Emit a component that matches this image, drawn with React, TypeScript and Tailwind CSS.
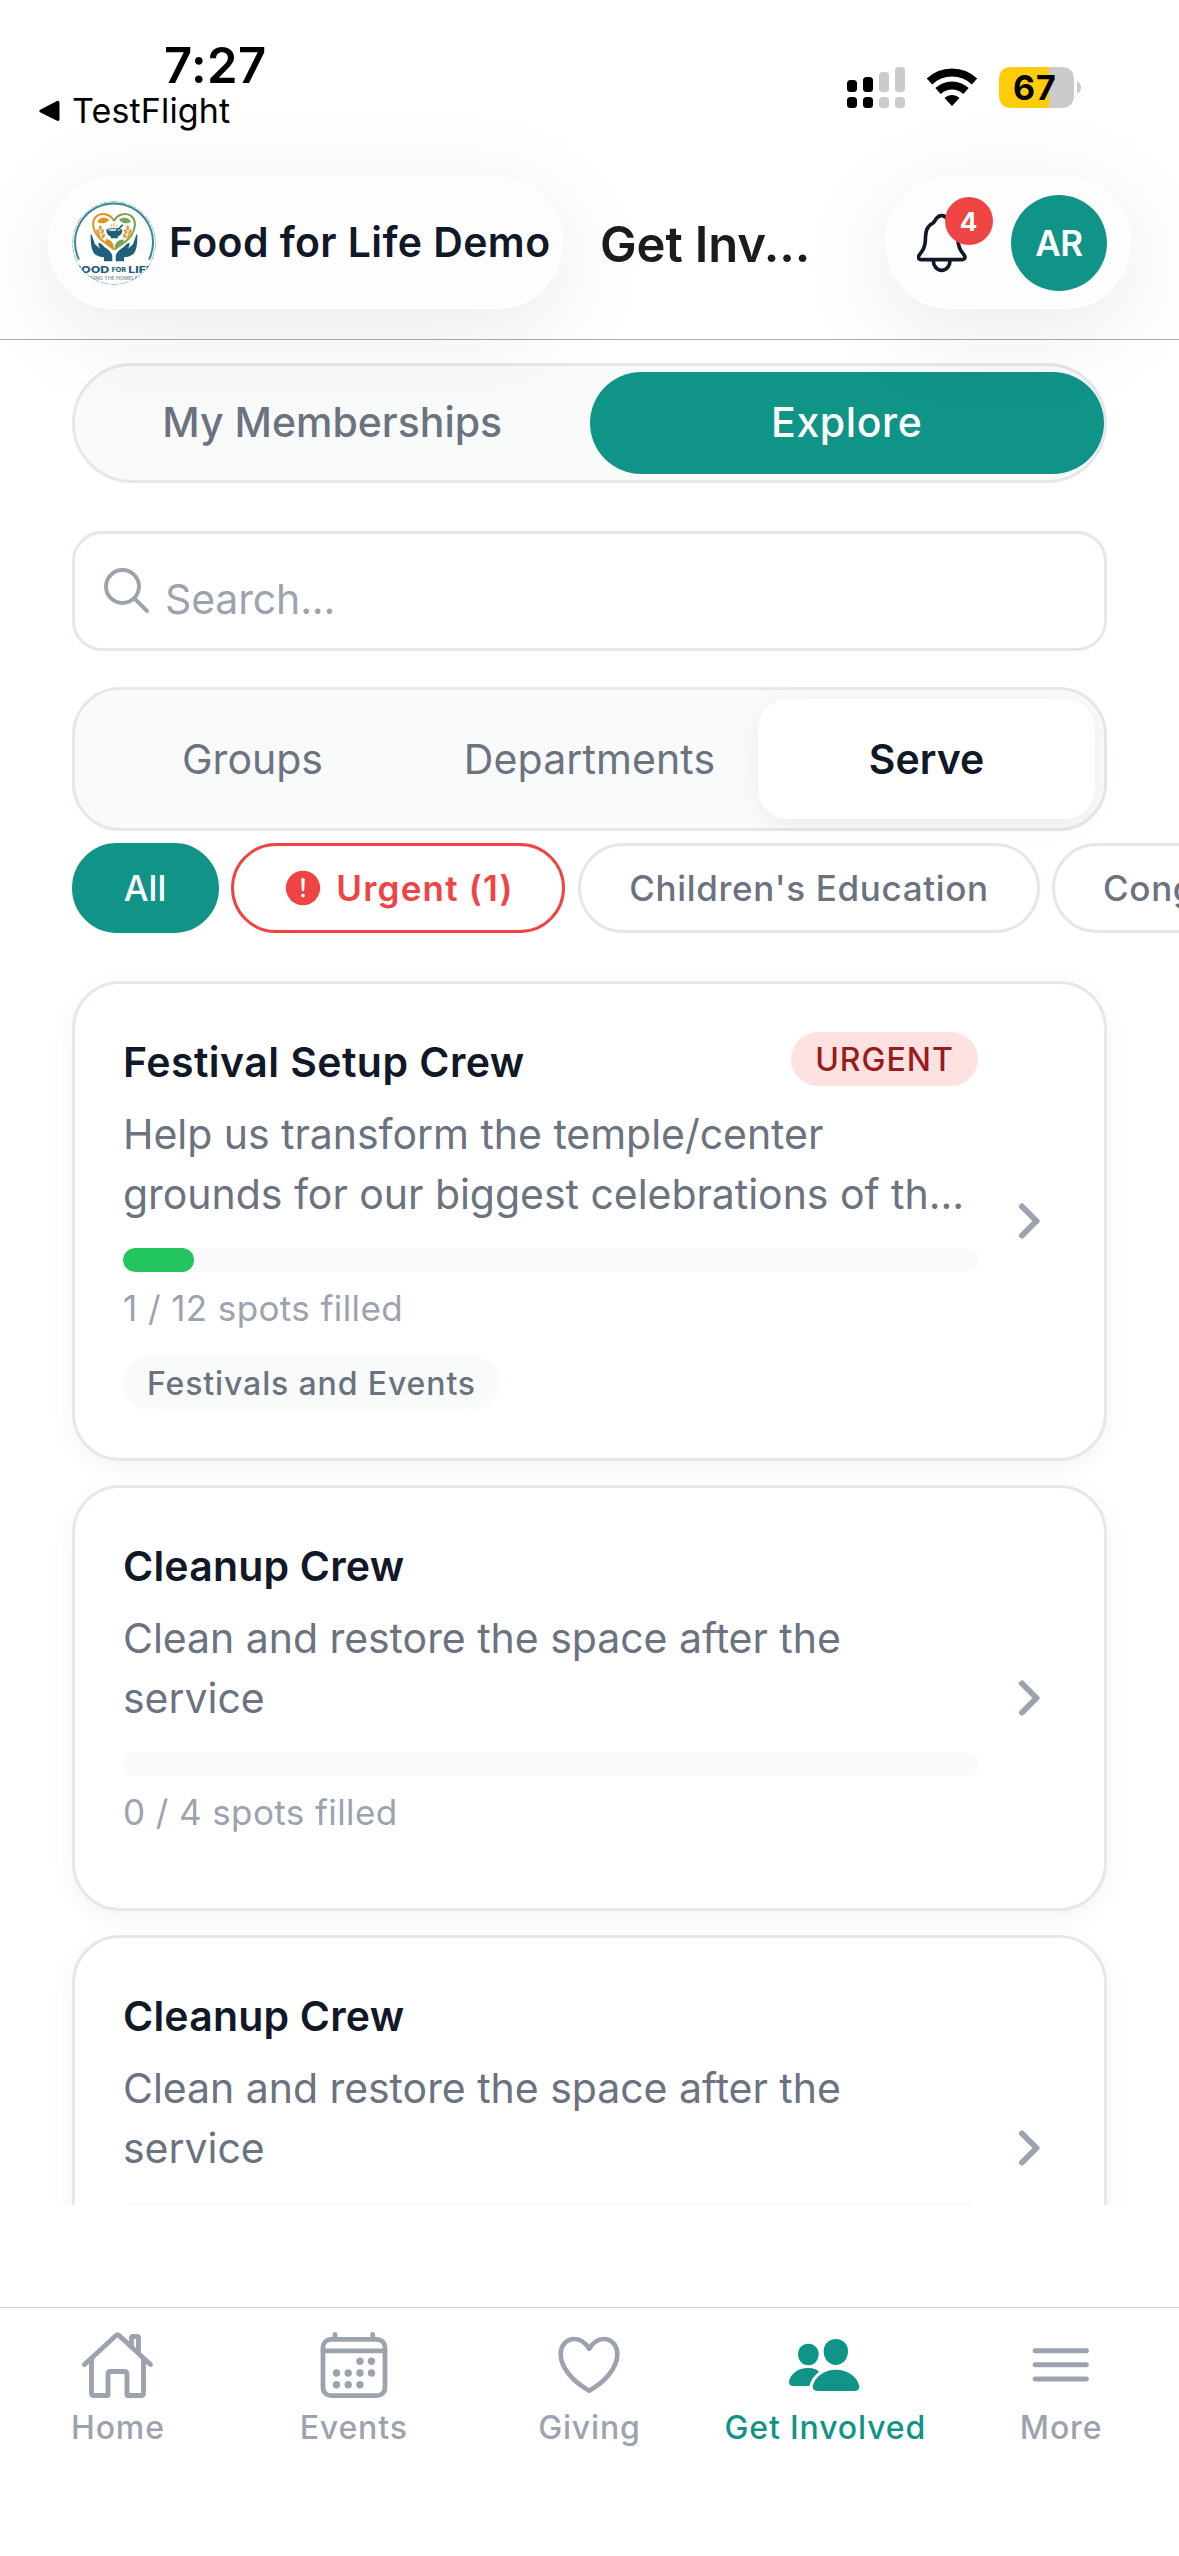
import type { ReactNode } from 'react'
import clsx from 'clsx'

interface Opportunity {
  id: number
  title: string
  description: string
  filled: number
  total: number
  urgent?: boolean
  category?: string
}

const opportunities: Opportunity[] = [
  {
    id: 1,
    title: 'Festival Setup Crew',
    description: 'Help us transform the temple/center grounds for our biggest celebrations of th...',
    filled: 1,
    total: 12,
    urgent: true,
    category: 'Festivals and Events',
  },
  { id: 2, title: 'Cleanup Crew', description: 'Clean and restore the space after the service', filled: 0, total: 4 },
  { id: 3, title: 'Cleanup Crew', description: 'Clean and restore the space after the service', filled: 0, total: 4 },
]

function StatusBar() {
  return (
    <div className="flex h-[177px] items-start justify-between pr-[98px] pl-[38px] text-black">
      <div className="pt-[35px]">
        <p className="pl-[126px] pt-px text-[49px] leading-[60px] font-semibold tracking-[0.4px]">7:27</p>
        <div className="flex items-center">
          <svg className="h-[22px] w-[23px]" viewBox="0 0 23 22">
            <path d="M2.6 9.4 18.5 1.2Q21.5 0 21.5 3.2V18.8Q21.5 22 18.5 20.6L2.6 12.6Q0 11 2.6 9.4Z" />
          </svg>
          <p className="ml-[11px] text-[34px] leading-[29px] tracking-[0.15px]">TestFlight</p>
        </div>
      </div>
      <div className="flex items-center gap-[21px] pt-[67px]">
        <svg className="h-[41px] w-[58px]" viewBox="0 0 58 41">
          <g fill="#000">
            <rect x="0" y="13" width="10" height="12" rx="3.5" />
            <rect x="16" y="10" width="10" height="15" rx="3.5" />
            <rect x="0" y="30" width="10" height="11" rx="3.5" />
            <rect x="16" y="30" width="10" height="11" rx="3.5" />
          </g>
          <g fill="#cbcbcb">
            <rect x="32" y="5" width="10" height="20" rx="3.5" />
            <rect x="48" y="0" width="10" height="25" rx="3.5" />
            <rect x="32" y="30" width="10" height="11" rx="3.5" />
            <rect x="48" y="30" width="10" height="11" rx="3.5" />
          </g>
        </svg>
        <svg className="h-[39px] w-[52px]" viewBox="0 0 52 39" fill="none" stroke="#000" strokeWidth="8">
          <path d="M3.5 13.5C16 1.5 36 1.5 48.5 13.5" />
          <path d="M12 23C20 15.5 32 15.5 40 23" />
          <path d="M18.5 30C23 26 29 26 33.5 30L26 38Z" fill="#000" stroke="none" />
        </svg>
        <div className="relative flex">
          <svg className="h-[41px] w-[82px]" viewBox="0 0 82 41">
            <path d="M13 0H62Q75 0 75 13V28Q75 41 62 41H50V0Z" fill="#cbcbcb" />
            <path d="M13 0H50V41H13Q0 41 0 28V13Q0 0 13 0Z" fill="#ffcc0a" />
            <path d="M78 14.5Q82 16 82 20.5T78 26.5Z" fill="#cbcbcb" />
          </svg>
          <span className="absolute top-0 left-[14px] text-[34px] leading-[42px] font-bold tracking-[0.8px]">67</span>
        </div>
      </div>
    </div>
  )
}

function Logo() {
  return (
    <svg className="size-[84px] shrink-0 rounded-full" viewBox="36 32 252 252" fill="none">
      <rect x="36" y="32" width="252" height="252" fill="#fff" />
      <circle cx="162" cy="158" r="124.5" stroke="#7cc4bf" strokeWidth="3" strokeDasharray="26 4" />
      <path d="M57 208A117 117 0 1 1 267 208" stroke="#3a8499" strokeWidth="6" />
      {/* two-tone heart */}
      <path d="M162 92C152 72 128 66 112 76C92 90 98 118 114 138C128 156 148 162 161 178" stroke="#de9420" strokeWidth="6" />
      <path d="M162 92C172 72 196 66 212 76C232 90 226 118 212 138C198 156 184 162 163 178" stroke="#79a457" strokeWidth="6" />
      <path d="M112 94C118 80 136 80 148 88C138 100 122 102 112 94Z" fill="#de9420" />
      <path d="M212 94C206 80 188 80 177 88C186 100 202 102 212 94Z" fill="#79a457" />
      <path d="M162 174C142 170 134 158 138 146C152 148 162 158 162 174Z" fill="#de9420" />
      <path d="M164 174C164 158 176 146 192 148C190 162 180 170 164 174Z" fill="#79a457" />
      <g fill="#e0a040">
        <ellipse cx="121" cy="113" rx="4.5" ry="8" />
        <ellipse cx="114" cy="124" rx="4.5" ry="8" transform="rotate(-30 114 124)" />
        <ellipse cx="127" cy="124" rx="4.5" ry="8" transform="rotate(30 127 124)" />
        <ellipse cx="117" cy="137" rx="4.5" ry="8" transform="rotate(-30 117 137)" />
        <ellipse cx="130" cy="137" rx="4.5" ry="8" transform="rotate(30 130 137)" />
        <ellipse cx="203" cy="113" rx="4.5" ry="8" />
        <ellipse cx="197" cy="124" rx="4.5" ry="8" transform="rotate(-30 197 124)" />
        <ellipse cx="210" cy="124" rx="4.5" ry="8" transform="rotate(30 210 124)" />
        <ellipse cx="194" cy="137" rx="4.5" ry="8" transform="rotate(-30 194 137)" />
        <ellipse cx="207" cy="137" rx="4.5" ry="8" transform="rotate(30 207 137)" />
      </g>
      {/* bowl and steam */}
      <path d="M139 118H187C187 130 180 136 173 139L174 144H152L153 139C146 136 139 130 139 118Z" fill="#1f5f78" />
      <ellipse cx="163" cy="119" rx="23" ry="4" fill="#fff" stroke="#1f5f78" strokeWidth="3" />
      <path d="M168 122 187 105" stroke="#1f5f78" strokeWidth="5" strokeLinecap="round" />
      <path d="M154 112Q151 107 155 102M162 111Q158 105 163 98M170 110Q168 106 171 103" stroke="#cf9a52" strokeWidth="2.5" />
      {/* hands */}
      <path d="M92 135Q90 130 95 133L105 162L120 175Q113 161 116 158Q121 156 134 171Q156 184 157 199V213H132V201Q110 200 101 187Q91 172 92 135Z" fill="#1f5f78" />
      <path d="M232 135Q234 130 229 133L219 162L204 175Q211 161 208 158Q203 156 190 171Q168 184 167 199V213H192V201Q214 200 223 187Q233 172 232 135Z" fill="#1f5f78" />
      <g fontFamily="Inter, sans-serif">
        <text x="41" y="248" fontSize="28" fontWeight="800" fill="#1f5f78" textLength="107" lengthAdjust="spacingAndGlyphs">FOOD</text>
        <text x="155" y="244" fontSize="18" fontWeight="800" fill="#1f5f78" textLength="43" lengthAdjust="spacingAndGlyphs">FOR</text>
        <text x="205" y="248" fontSize="28" fontWeight="800" fill="#1f5f78" textLength="76" lengthAdjust="spacingAndGlyphs">LIFE</text>
        <text x="62" y="270" fontSize="13.5" fontWeight="600" fill="#8d9497" textLength="192" lengthAdjust="spacingAndGlyphs">FEEDING THE HOMELESS</text>
      </g>
    </svg>
  )
}

function Header() {
  return (
    <header className="relative z-10 h-[340px] border-b border-[#aeaeae]">
      <StatusBar />
      <div className="flex h-[132px] items-center pr-12 pl-12">
        <div className="flex h-full w-[515px] shrink-0 items-center gap-3 rounded-full border-2 border-white bg-[#fdfdfd] pl-[22px] shadow-[0_20px_100px_rgba(0,0,0,0.09)]">
          <Logo />
          <span className="pl-px text-[41px] font-semibold tracking-[0.4px] whitespace-nowrap text-[#111827]">Food for Life Demo</span>
        </div>
        <h1 className="ml-[37px] pt-[3px] text-[49px] font-semibold tracking-[-0.15px] whitespace-nowrap text-[#1c1c1e]">Get Inv...</h1>
        <div className="ml-auto flex h-full w-[246px] items-center justify-between rounded-full border-2 border-white bg-[#fdfdfd] pr-[22px] pl-[30px] shadow-[0_20px_100px_rgba(0,0,0,0.09)]">
          <div className="relative">
            <svg className="h-[60px] w-[50px]" viewBox="52 99 150 180" fill="none" stroke="#111827" strokeWidth="11" strokeLinejoin="round">
              <path d="M64 239H188Q200 237 194 226C184 213 176 204 175 182C174 155 173 140 152 129C144 122 142 107 126 107C110 107 108 122 100 129C79 140 78 155 77 182C76 204 68 213 58 226Q52 237 64 239Z" />
              <path d="M101 242A25 29 0 0 0 151 242" />
            </svg>
            <span className="absolute -top-4 left-7 flex size-12 items-center justify-center rounded-full bg-[#ef4444] pr-px text-[26px] font-bold text-white">4</span>
          </div>
          <div className="flex size-24 items-center justify-center rounded-full bg-[#119488] text-[35px] font-semibold tracking-[-0.3px] text-white">AR</div>
        </div>
      </div>
    </header>
  )
}

function Chip({ className, children }: { className?: string; children: ReactNode }) {
  return (
    <button
      type="button"
      className={clsx(
        'flex h-[90px] shrink-0 items-center justify-center rounded-full border-[3px] text-[35px] whitespace-nowrap',
        className,
      )}
    >
      {children}
    </button>
  )
}

function OpportunityCard({ item }: { item: Opportunity }) {
  return (
    <div className="flex shrink-0 items-center gap-6 rounded-[48px] border-[3px] border-[#e5e7eb] bg-white p-12 shadow-[0_6px_24px_rgba(0,0,0,0.05)]">
      <div className="w-[855px]">
        <div className="flex h-[60px] items-start justify-between">
          <h2 className={clsx('text-[41px] leading-[60px] font-semibold text-[#111827]', item.urgent ? 'tracking-[0.45px]' : 'tracking-[0.2px]')}>{item.title}</h2>
          {item.urgent && (
            <span className="flex h-[54px] w-[187px] items-center justify-center rounded-full bg-[#fee2e2] pt-px text-[32px] font-medium tracking-[1px] text-[#991b1b]">URGENT</span>
          )}
        </div>
        <p className="mt-3 h-[120px] text-[41px] leading-[60px] tracking-[-0.04px] text-[#6b7280]">{item.description}</p>
        <div className="mt-6 h-6 overflow-hidden rounded-full bg-[#f9fafa]">
          <div className="h-full rounded-full bg-[#22c55e]" style={{ width: `${(item.filled / item.total) * 100}%` }} />
        </div>
        <p className="mt-3 text-[35px] leading-[48px] tracking-[0.4px] text-[#9ca3af]">
          {`${item.filled} / ${item.total} spots filled`}
        </p>
        <div className="mt-6 flex">
          {item.category && (
            <span className="flex h-[54px] w-[377px] items-center justify-center rounded-full bg-[#f9fafa] pt-px text-[32px] font-medium tracking-[0.87px] text-[#6b7280]">
              {item.category}
            </span>
          )}
        </div>
      </div>
      <svg className="size-[54px] shrink-0" viewBox="0 0 54 54" fill="none" stroke="#9ca3af" strokeWidth="6" strokeLinecap="round" strokeLinejoin="round">
        <path d="M20 12.500 34.500 27 20 41.500" />
      </svg>
    </div>
  )
}

const navItems = [
  {
    label: 'Home',
    icon: (
      <svg className="h-[72px] w-[84px]" viewBox="0 0 84 72" fill="none" stroke="currentColor" strokeWidth="4.9" strokeLinecap="round" strokeLinejoin="round">
        <path d="M8.500 36.500 40 7.500Q41.500 6 43 7.500L74.500 36.500" />
        <path d="M15.500 31V65Q15.500 67.500 18 67.500H32V46.500Q32 43.500 35 43.500H48Q51 43.500 51 46.500V67.500H65Q67.500 67.500 67.500 65V31" />
        <path d="M55.500 18V10Q55.500 8.500 57 8.500H61Q62.500 8.500 62.500 10V25" />
      </svg>
    ),
  },
  {
    label: 'Events',
    icon: (
      <svg className="h-[72px] w-[84px]" viewBox="0 0 84 72" fill="none" stroke="currentColor" strokeWidth="4.8" strokeLinecap="round">
        <rect x="11" y="11.3" width="62" height="56.4" rx="8" />
        <path d="M11 22.800H73M23 6.300V10M60.700 6.300V10" />
        <g fill="currentColor" stroke="none">
          <circle cx="48" cy="33.3" r="3.7" />
          <circle cx="59.5" cy="33.3" r="3.7" />
          <circle cx="24.5" cy="45" r="3.7" />
          <circle cx="36.2" cy="45" r="3.7" />
          <circle cx="48" cy="45" r="3.7" />
          <circle cx="59.5" cy="45" r="3.7" />
          <circle cx="24.5" cy="56.8" r="3.7" />
          <circle cx="36.2" cy="56.8" r="3.7" />
          <circle cx="48" cy="56.8" r="3.7" />
        </g>
      </svg>
    ),
  },
  {
    label: 'Giving',
    icon: (
      <svg className="h-[72px] w-[84px]" viewBox="22.5 24 252 216" fill="none" stroke="currentColor" strokeWidth="14" strokeLinejoin="round">
        <path d="M149 86C138 68 124 57 105 57C80 57 63.500 77 63.500 102C63.500 145 103 186 149 212C195 186 233.500 145 233.500 102C233.500 77 217 57 192 57C173 57 160 68 149 86Z" />
      </svg>
    ),
  },
  {
    label: 'Get Involved',
    active: true,
    icon: (
      <svg className="h-[72px] w-[84px]" viewBox="730 24 252 216" fill="currentColor">
        <path d="M806 71C824 71 837 84 837 102C837 121 824 136 806 136C788 136 775 121 775 102C775 84 788 71 806 71Z" />
        <path d="M888.500 57C910 57 925 72 925 94C925 117 910 135 888.500 135C867 135 852 117 852 94C852 72 867 57 888.500 57Z" />
        <path d="M833 213H946Q960 211 959 198C952 170 925 149 889 149C853 149 826 170 819 198Q818 211 833 213Z" />
        <path d="M759 198H809C814 180 823 167 838 156Q830 144 805 144C775 144 752 162 748 184Q747 197 759 198Z" />
      </svg>
    ),
  },
  {
    label: 'More',
    icon: (
      <svg className="h-[72px] w-[84px]" viewBox="0 0 84 72" stroke="currentColor" strokeWidth="4.9" strokeLinecap="round">
        <path d="M16 22.800H67.500M16 36.800H67.500M16 51H67.500" />
      </svg>
    ),
  },
]

export default function App() {
  return (
    <div className="flex h-[2556px] w-[1179px] flex-col overflow-hidden bg-white font-['Inter','Liberation_Sans',sans-serif]">
      <Header />
      <main className="flex h-[1865px] flex-col overflow-hidden px-[72px] pt-[23px]">
        <div className="flex h-[120px] shrink-0 rounded-full border-[3px] border-[#e5e7eb] bg-[#f9fafa] py-[6px] text-[41px] font-medium">
          <button type="button" className="flex-1 text-[#6b7280]">My Memberships</button>
          <button type="button" className="flex-1 rounded-full bg-[#119488] tracking-[0.6px] text-white">Explore</button>
        </div>

        <div className="mt-12 flex h-[120px] shrink-0 items-center rounded-[30px] border-[3px] border-[#e5e7eb] bg-white pl-[29px]">
          <svg className="h-[46px] w-[46px] shrink-0" viewBox="0 0 46 46" fill="none" stroke="#9ca3af" strokeWidth="3.9" strokeLinecap="round">
            <circle cx="18.5" cy="18.5" r="16.5" />
            <path d="M30.500 30.500 43 43" />
          </svg>
          <input
            placeholder="Search..."
            className="ml-[15px] h-[114px] flex-1 bg-transparent pt-4 text-[41px] tracking-[-0.15px] outline-none placeholder:text-[#9ca3af]"
          />
        </div>

        <div className="mt-9 flex h-36 shrink-0 rounded-[48px] border-[3px] border-[#e5e7eb] bg-[#f9fafa] p-[9px] text-[41px] text-[#6b7280]">
          <button type="button" className="flex-1 pt-[2px]">Groups</button>
          <button type="button" className="flex-1 pt-[2px] tracking-[0.1px]">Departments</button>
          <button type="button" className="flex-1 rounded-[30px] bg-white pt-[2px] font-semibold text-[#111827] shadow-[0_6px_24px_rgba(0,0,0,0.06)]">Serve</button>
        </div>

        <div className="-mr-[72px] mt-3 flex shrink-0 gap-3 overflow-hidden">
          <Chip className="w-[147px] border-[#119488] bg-[#119488] pr-px font-medium text-white">All</Chip>
          <Chip className="w-[334px] gap-[15px] border-[#ef4444] pl-[3px] font-semibold tracking-[1.2px] text-[#ef4444]">
            <svg className="size-9" viewBox="0 0 36 36">
              <circle cx="18" cy="18" r="17.2" fill="#ef4444" />
              <path d="M16.300 9.500Q16.300 8 18 8T19.700 9.500L19.200 20Q19.100 21.200 18 21.200T16.800 20Z" fill="#fff" />
              <circle cx="18" cy="25.6" r="1.8" fill="#fff" />
            </svg>
            Urgent (1)
          </Chip>
          <Chip className="ml-px w-[462px] border-[#e5e7eb] bg-white font-medium tracking-[0.66px] text-[#6b7280]">Children's Education</Chip>
          <Chip className="border-[#e5e7eb] bg-white px-12 font-medium tracking-[0.66px] text-[#6b7280]">Congregational Care</Chip>
        </div>

        <div className="mt-12 flex flex-col gap-6">
          {opportunities.map((item) => (
            <OpportunityCard key={item.id} item={item} />
          ))}
        </div>
      </main>

      <nav className="mt-[102px] flex flex-1 border-t border-[#d4d5d7] pt-5">
        {navItems.map(({ label, icon, active }) => (
          <button
            key={label}
            type="button"
            className={clsx('flex flex-1 basis-0 flex-col items-center', active ? 'text-[#119488]' : 'text-[#9ca3af]')}
          >
            {icon}
            <span className="mt-1 text-[32px] leading-[48px] font-medium tracking-[0.85px] whitespace-nowrap">{label}</span>
          </button>
        ))}
      </nav>
    </div>
  )
}
